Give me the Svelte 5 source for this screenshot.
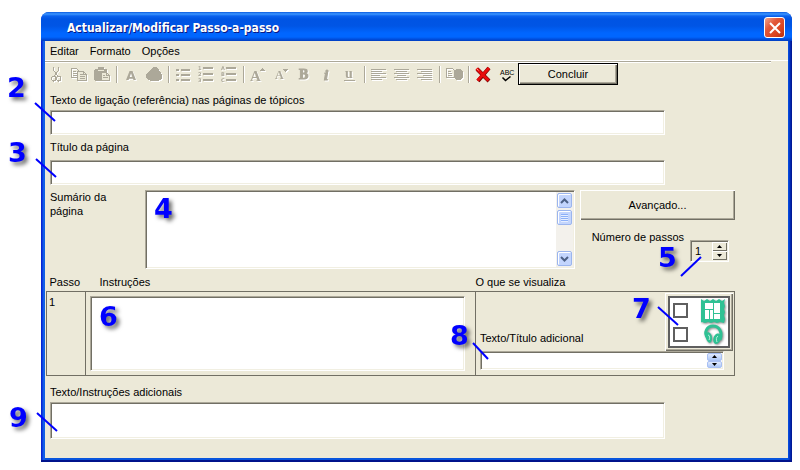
<script>
  let linkText = $state('')
  let pageTitle = $state('')
  let summary = $state('')
  let instructions = $state('')
  let extraTitle = $state('')
  let extraText = $state('')
  let steps = $state(1)
  let showImage = $state(false)
  let playAudio = $state(false)

  const menus = ['Editar', 'Formato', 'Opções']

  const tools = [
    ['cut', 'copy', 'paste'],
    ['font', 'color'],
    ['bullets', 'numbers', 'letters'],
    ['grow', 'shrink', 'bold', 'italic', 'underline'],
    ['left', 'center', 'right'],
    ['insert'],
    ['delete', 'spell'],
  ]

  const labels = {
    cut: 'Cortar',
    copy: 'Copiar',
    paste: 'Colar',
    font: 'Tipo de letra',
    color: 'Cor',
    bullets: 'Marcas',
    numbers: 'Numeração',
    letters: 'Alíneas',
    grow: 'Aumentar letra',
    shrink: 'Diminuir letra',
    bold: 'Negrito',
    italic: 'Itálico',
    underline: 'Sublinhado',
    left: 'Alinhar à esquerda',
    center: 'Centrar',
    right: 'Alinhar à direita',
    insert: 'Inserir',
    delete: 'Eliminar',
    spell: 'Ortografia',
  }

  const lineWidths = [15, 11, 15, 9, 15, 11]
  const rows = [4, 9, 14]
  const markRows = [3, 9, 15]
  const lineStart = { left: 0, center: 0.5, right: 1 }
</script>

{#snippet callout(n, x, y, line)}
  <svg class="callout" width="1" height="1">
    {#if line}
      <line x1={line[0]} y1={line[1]} x2={line[2]} y2={line[3]} />
    {/if}
    <text {x} {y}>{n}</text>
  </svg>
{/snippet}

{#snippet icon(name)}
  <svg width="17" height="17" viewBox="0 0 17 17" class:etched={name !== 'delete' && name !== 'spell'}>
    {#if name === 'cut'}
      <path d="M5.5 1v3l4 6M10.500 1v3l-4 6" class="stroke" />
      <ellipse cx="5.500" cy="12.500" rx="2" ry="2.500" class="stroke" />
      <ellipse cx="10.500" cy="12.500" rx="2" ry="2.500" class="stroke" />
    {:else if name === 'copy'}
      <path d="M.5 2.500h5l3 3v6h-8zM2 5.500h3M2 7.500h4M2 9.500h4" class="stroke" />
      <path d="M6.500 5.500h6l3 3v6h-9z" fill="#ece9d8" class="stroke" />
      <path d="M12.500 5.500v3h3M8.500 8.500h3M8.500 10.500h5M8.500 12.500h5" class="stroke" />
    {:else if name === 'paste'}
      <path d="M1 3h3V1h6v2h3v3H7v9H1L0 14V4z" />
      <path d="M7.500 6.500h5l3 3v5h-8z" fill="#ece9d8" class="stroke" />
      <path d="M4 4.500h6" stroke="#ece9d8" />
      <path d="M12.500 6.500v3h3M9 9.500h2M9 11.500h5" class="stroke" />
    {:else if name === 'font'}
      <text x="3" y="14" class="sans" font-size="13">A</text>
    {:else if name === 'color'}
      <path d="M7 1h3l1 1 2 2 1 2 1 1 1 2v3l-2 2-2 1H5l-3-1-2-2V9l2-3 2-2z" />
    {:else if name === 'bullets'}
      {#each rows as y}
        <path d="M1 {y - 1}h3v2h-3zM6 {y - 1}h9v2h-9z" />
      {/each}
    {:else if name === 'numbers' || name === 'letters'}
      {#each markRows as y, i}
        <text x="0" y={y + 1} class="sans" font-size="5">{name === 'numbers' ? i + 1 : 'ABC'[i]}</text>
        <path d="M5 {y - 2}h10v2h-10z" />
      {/each}
    {:else if name === 'grow'}
      <text x="0" y="15" class="serif" font-size="15">A</text>
      <path d="M9 5h6l-3-3z" />
    {:else if name === 'shrink'}
      <text x="2" y="13" class="serif" font-size="12">A</text>
      <path d="M10 3h5l-2.500 3z" />
    {:else if name === 'bold'}
      <text x="3" y="13" class="serif heavy" font-size="14">B</text>
    {:else if name === 'italic'}
      <text x="5" y="14" class="serif heavy slanted" font-size="15">i</text>
    {:else if name === 'underline'}
      <text x="3" y="12" class="serif" font-size="14">u</text>
      <path d="M2 14h11v1H2z" />
    {:else if name === 'insert'}
      <path d="M.5 2.500h6l3 3v6h-9zM2 5.500h3M2 7.500h4M2 9.500h4" class="stroke" />
      <path d="M10 3h4l3 3v5l-3 3h-4l-2-2V5z" />
    {:else if name === 'delete'}
      <path d="M2 3l12 12M14 2L3 15" stroke="#700" stroke-width="4" />
      <path d="M1.500 2.500l12 12M14 2L2.500 14.500" stroke="#e80c0c" stroke-width="3" />
      <path d="M1.500 2.500l2 2" stroke="#ff9a8a" />
    {:else if name === 'spell'}
      <text x="2" y="9" class="abc" font-size="7">ABC</text>
      <path d="M4.500 11.500l3 3 5-4" fill="none" stroke="#000" stroke-width="1.500" />
    {:else}
      {#each lineWidths as w, i}
        <path d="M{Math.round((15 - w) * lineStart[name])} {3 + i * 2}h{w}v1h-{w}z" />
      {/each}
    {/if}
  </svg>
{/snippet}

{#snippet arrow(up)}
  <svg width="9" height="6" viewBox="0 0 9 6">
    <path d={up ? 'M1 5l3.500-3.500L8 5' : 'M1 1l3.500 3.500L8 1'} fill="none" stroke="#4d6185" stroke-width="2" />
  </svg>
{/snippet}

{#snippet tinyArrow(up)}
  <svg width="5" height="3" viewBox="0 0 5 3">
    <path d={up ? 'M0 3h5L2.500 0z' : 'M0 0h5L2.500 3z'} />
  </svg>
{/snippet}

<main>
  <section class="window">
    <header>
      <h1>Actualizar/Modificar Passo-a-passo</h1>
      <button class="close" aria-label="Fechar">
        <svg width="12" height="12" viewBox="0 0 12 12">
          <path d="M1 1l10 10M11 1L1 11" stroke="#fff" stroke-width="2" />
        </svg>
      </button>
    </header>

    <div class="body">
      <nav>
        {#each menus as menu}
          <button>{menu}</button>
        {/each}
      </nav>

      <div class="toolbar">
        {#each tools as group, i}
          {#if i > 0}
            <span class="sep"></span>
          {/if}
          {#each group as name}
            <button class="tool" aria-label={labels[name]}>{@render icon(name)}</button>
          {/each}
        {/each}
        <button class="done">Concluir</button>
      </div>

      <form onsubmit={e => e.preventDefault()}>
        <div class="field first">
          <label for="link">Texto de ligação (referência) nas páginas de tópicos</label>
          <div class="anchor">
            <input id="link" class="sunken" type="text" bind:value={linkText} />
            {@render callout(2, -43, -13, [-15, -7, 5, 11])}
          </div>
        </div>

        <div class="field second">
          <label for="title">Título da página</label>
          <div class="anchor">
            <input id="title" class="sunken" type="text" bind:value={pageTitle} />
            {@render callout(3, -42, 2, [-14, -1, 6, 17])}
          </div>
        </div>

        <div class="summary">
          <label for="summary">Sumário da página</label>
          <div class="anchor sunken scroller">
            <textarea id="summary" bind:value={summary}></textarea>
            <div class="scrollbar">
              <button type="button" aria-label="Subir">{@render arrow(true)}</button>
              <div class="thumb"></div>
              <button type="button" class="down" aria-label="Descer">{@render arrow(false)}</button>
            </div>
            {@render callout(4, 8, 27)}
          </div>
          <div class="side">
            <button type="button" class="advanced">Avançado...</button>
            <div class="steps">
              <label for="steps">Número de passos</label>
              <div class="anchor sunken spinner">
                <input id="steps" type="number" min="1" bind:value={steps} />
                <div class="spin">
                  <button type="button" aria-label="Mais" onclick={() => steps++}>{@render tinyArrow(true)}</button>
                  <button type="button" aria-label="Menos" onclick={() => (steps = Math.max(1, steps - 1))}>{@render tinyArrow(false)}</button>
                </div>
                {@render callout(5, -33, 26, [10, 16, -10, 35])}
              </div>
            </div>
          </div>
        </div>

        <table>
          <thead>
            <tr>
              <th class="step">Passo</th>
              <th class="what">Instruções</th>
              <th class="view">O que se visualiza</th>
            </tr>
          </thead>
          <tbody>
            <tr>
              <td class="number">1</td>
              <td class="write">
                <div class="anchor">
                  <textarea class="sunken" aria-label="Instruções" bind:value={instructions}></textarea>
                  {@render callout(6, 9, 30)}
                </div>
              </td>
              <td>
                <div class="visual">
                  <label for="extra">Texto/Título adicional</label>
                  <div class="anchor panel">
                    <div class="options">
                      <input type="checkbox" aria-label="Imagem" bind:checked={showImage} />
                      <svg class="media" width="24" height="24" viewBox="0 0 24 24">
                        <path d="M0 0l3 2 3-2 3 2 3-2 3 2 3-2 3 2 3-2-1 4 1 3-1 3 1 3-1 3 1 4-1 4-4-1-3 1-3-1-3 1-3-1-3 1-3-1-2 1 1-4-1-4 1-3-1-3 1-3-1-3z" fill="#2fc194" />
                        <path d="M4 4h8v6H4zM13 4h6v10h-6zM4 11h4v9H4zM9 11h3v9H9zM13 15h6v5h-6z" fill="#fff" />
                      </svg>
                      <input type="checkbox" aria-label="Som" bind:checked={playAudio} />
                      <svg class="media" width="24" height="22" viewBox="0 0 24 22">
                        <path d="M7 14C2 9 6 2 12 2s10 6 7 14" fill="none" stroke="#2fc194" stroke-width="3" />
                        <path d="M5 9c3-2 6 1 6 5s-2 6-4 4-3-6-2-9zM14 11c3-3 6-1 6 2s-2 7-5 7-4-6-1-9z" fill="#2fc194" />
                        <path d="M7 11c2 0 2 4 1 5M17 12c-2 1-2 4-1 6" fill="none" stroke="#b5f0da" />
                      </svg>
                    </div>
                    {@render callout(7, -33, 25, [-7, 14, 13, 32])}
                  </div>
                  <div class="anchor sunken combo">
                    <input id="extra" type="text" bind:value={extraTitle} />
                    <div class="comboSpin">
                      <button type="button" aria-label="Anterior">{@render tinyArrow(true)}</button>
                      <button type="button" aria-label="Seguinte">{@render tinyArrow(false)}</button>
                    </div>
                    {@render callout(8, -31, -7, [-8, -9, 7, 7])}
                  </div>
                </div>
              </td>
            </tr>
          </tbody>
        </table>

        <div class="field last">
          <label for="more">Texto/Instruções adicionais</label>
          <div class="anchor">
            <textarea id="more" class="sunken" bind:value={extraText}></textarea>
            {@render callout(9, -41, 25, [-13, 11, 7, 29])}
          </div>
        </div>
      </form>
    </div>
  </section>
</main>

<style>
  :global(body) {
    background: #fff;
  }

  main {
    padding: 12px 8px 8px 41px;
    font: 11px/14px "Liberation Sans", Arial, sans-serif;
    color: #000;
  }

  main * {
    box-sizing: border-box;
  }

  button, input, textarea {
    font: inherit;
    color: inherit;
    margin: 0;
    padding: 0;
    border: 0;
    border-radius: 0;
    outline: 0;
  }

  svg {
    display: block;
  }

  .window {
    background: linear-gradient(90deg, #0019cf, #0831d9 1px, #166aee 3px, #0855dd 4px, #0855dd calc(100% - 4px), #0441d8 calc(100% - 3px), #001ea0 calc(100% - 1px), #00138c);
    border-bottom: 2px solid #00138c;
    border-radius: 8px 8px 0 0;
  }

  header {
    display: flex;
    align-items: center;
    justify-content: space-between;
    height: 29px;
    padding: 2px 7px 0 26px;
    border-radius: 8px 8px 0 0;
    background: linear-gradient(#0a5be0, #3c95ff 2px, #0b62ee 4px, #0054e3 7px, #0055e5 14px, #0066ff 21px, #0066ff 25px, #0050e0 27px, #003dc0);
  }

  h1 {
    margin: 0;
    font: bold 12px/16px "DejaVu Sans Condensed", "DejaVu Sans", sans-serif;
    color: #fff;
    text-shadow: 1px 1px 0 #0a1883;
  }

  .close {
    display: grid;
    place-items: center;
    width: 21px;
    height: 21px;
    border: 1px solid #fff;
    border-radius: 3px;
    background: linear-gradient(135deg, #f0a58c, #e2583a 35%, #da4420 70%, #b43010);
  }

  .body {
    margin: 0 4px;
    background: #ece9d8;
    border-bottom: 2px solid #0855dd;
    background-clip: padding-box;
  }

  nav {
    display: flex;
    gap: 11px;
    height: 20px;
    padding-left: 5px;
    border-bottom: 1px solid #fff;
  }

  nav button {
    background: none;
  }

  .toolbar {
    display: flex;
    height: 24px;
    margin-right: 17px;
    padding-top: 1px;
    border-top: 1px solid #aca899;
    box-shadow: inset 0 1px #fff;
  }

  .tool {
    width: 23px;
    padding: 2px 3px;
    background: none;
  }

  .etched {
    fill: #aca899;
    filter: drop-shadow(1px 1px 0 #fff);
    shape-rendering: crispEdges;
  }

  .etched .stroke {
    stroke: #aca899;
  }

  .stroke:not([fill]) {
    fill: none;
  }

  .sans {
    font-family: "DejaVu Sans", sans-serif;
    font-weight: bold;
  }

  .serif {
    font-family: "Liberation Serif", serif;
    font-weight: bold;
  }

  .heavy {
    stroke: #aca899;
  }

  .slanted {
    font-style: italic;
  }

  .abc {
    font-family: "Liberation Sans", sans-serif;
  }

  .sep {
    width: 2px;
    height: 17px;
    margin: 3px 2px;
    background: linear-gradient(90deg, #aca899 50%, #fff 50%);
  }

  .done {
    width: 100px;
    border: 1px solid #000;
    background: #ece9d8;
    box-shadow: inset 1px 1px #fff, inset -1px -1px #716f64, inset -2px -2px #aca899;
  }

  form {
    padding: 8px 53px 19px 1px;
  }

  .field {
    padding: 0 70px 0 4px;
  }

  label {
    display: block;
  }

  .anchor {
    position: relative;
  }

  .sunken {
    display: block;
    width: 100%;
    border: 1px solid;
    border-color: #aca899 #fff #fff #aca899;
    background: #fff;
    box-shadow: inset 1px 1px #716f64, inset -1px -1px #f1efe2;
  }

  textarea {
    display: block;
    resize: none;
    overflow: hidden;
  }

  .first input, .second input {
    height: 25px;
    margin-top: 3px;
    padding: 0 4px;
  }

  .second {
    padding-top: 5px;
  }

  .second label {
    padding-bottom: 3px;
  }

  .summary {
    display: grid;
    grid-template-columns: 90px 1fr 155px;
    column-gap: 5px;
    margin: 5px 0 0 4px;
  }

  .summary > label {
    width: 70px;
  }

  .scroller {
    display: flex;
    height: 79px;
    padding: 1px;
  }

  .scroller textarea {
    flex: 1;
  }

  .scrollbar {
    display: flex;
    flex-direction: column;
    gap: 2px;
    width: 17px;
    padding: 1px;
    background: #f3f1ec;
  }

  .scrollbar button, .thumb {
    display: grid;
    place-items: center;
    height: 15px;
    border: 1px solid #9bb5ee;
    border-radius: 2px;
    background: #c3d5fd;
    box-shadow: inset 1px 1px #fff;
  }

  .thumb {
    background: repeating-linear-gradient(#8cb0f8 0 1px, #e6eeff 1px 2px) center / 7px 8px no-repeat #c3d5fd;
  }

  .scrollbar .down {
    margin-top: auto;
  }

  .advanced {
    width: 100%;
    height: 30px;
    background: #ece9d8;
    box-shadow: inset 1px 1px #fff, inset -1px -1px #716f64, inset -2px -2px #aca899;
  }

  .steps {
    display: flex;
    justify-content: flex-end;
    gap: 6px;
    padding: 10px 6px 0 0;
  }

  .spinner {
    display: flex;
    width: 39px;
    height: 22px;
    margin-top: 10px;
    padding: 1px;
    background: #ece9d8;
  }

  .spinner input {
    width: 20px;
    padding-left: 3px;
    background: none;
    appearance: textfield;
  }

  .spinner input::-webkit-inner-spin-button {
    display: none;
  }

  .spin, .comboSpin {
    display: grid;
    grid-template-rows: 1fr 1fr;
    width: 15px;
  }

  .spin button {
    display: grid;
    place-items: center;
    background: #ece9d8;
    box-shadow: inset 1px 1px #fff, inset -1px -1px #716f64;
  }

  table {
    width: 100%;
    table-layout: fixed;
    border-collapse: collapse;
  }

  th {
    padding: 6px 0 2px;
    font-weight: normal;
    text-align: left;
  }

  .step {
    width: 39px;
    padding-left: 3px;
  }

  .what {
    padding-left: 14px;
  }

  .view {
    width: 259px;
  }

  td {
    height: 83px;
    padding: 0;
    border: 1px solid #716f64;
    vertical-align: top;
  }

  .number {
    padding: 3px 2px;
  }

  .write {
    padding: 4px 10px 4px 4px;
  }

  .write textarea {
    height: 75px;
    padding: 4px;
  }

  .visual {
    display: grid;
    grid-template-columns: 1fr 68px;
    padding: 1px 1px 0 4px;
  }

  .visual label {
    align-self: end;
    padding-bottom: 6px;
  }

  .panel {
    height: 58px;
    padding: 3px;
    background: #ece9d8;
    box-shadow: inset 1px 1px #fff, inset -1px -1px #716f64, inset -2px -2px #aca899;
  }

  .options {
    display: grid;
    grid-template-columns: 15px 24px;
    justify-content: space-between;
    align-items: center;
    height: 52px;
    padding: 0 3px;
    border: 2px solid #5f5f5f;
    background: #fff;
  }

  .options input {
    appearance: none;
    width: 15px;
    height: 15px;
    border: 2px solid #5f5f5f;
    background: #fff;
  }

  .options input:checked {
    background: #2fc194;
  }

  .media {
    filter: drop-shadow(1px 1px 1px #888);
  }

  .combo {
    display: flex;
    grid-column: 1 / -1;
    width: auto;
    height: 19px;
    margin-right: 9px;
    padding: 1px;
  }

  .combo input {
    flex: 1;
    min-width: 0;
    padding-left: 3px;
    background: none;
  }

  .comboSpin button {
    display: grid;
    place-items: center;
    border: 1px solid #a9c0f3;
    border-radius: 2px;
    background: linear-gradient(#e1eafe, #aec8f7);
  }

  .last {
    padding-top: 9px;
  }

  .last textarea {
    height: 37px;
    margin-top: 3px;
    padding: 4px;
  }

  /* numbered notes laid over the dialog */
  .callout {
    position: absolute;
    z-index: 2;
    top: 0;
    left: 0;
    overflow: visible;
    pointer-events: none;
  }

  .callout text {
    font: bold 27px "DejaVu Sans", sans-serif;
    fill: #00f;
    filter: drop-shadow(3px 3px 2px rgba(0, 0, 0, 0.6));
  }

  .callout line {
    stroke: #00f;
    stroke-width: 2;
  }
</style>
